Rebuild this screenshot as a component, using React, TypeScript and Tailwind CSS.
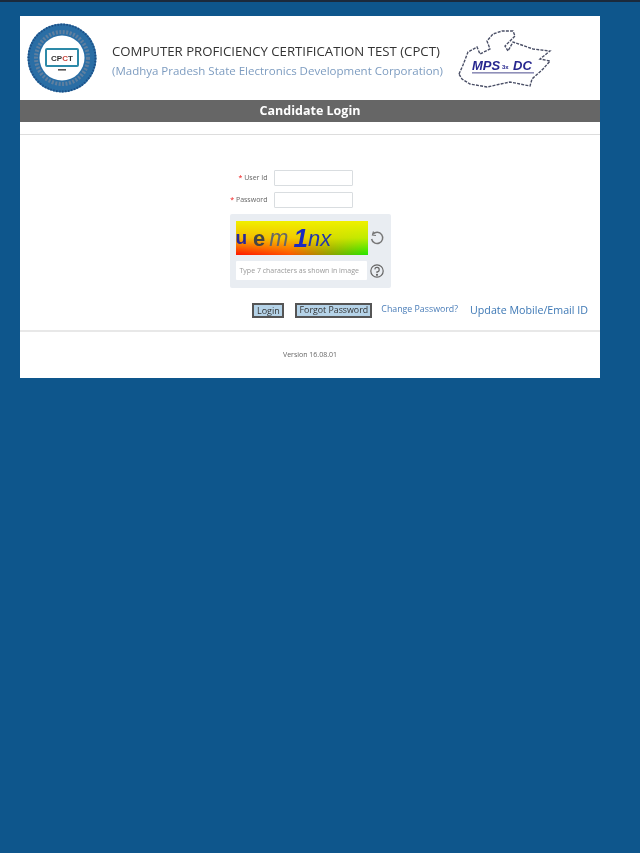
import React from 'react';

const sans = { fontFamily: '"Open Sans", "Liberation Sans", sans-serif' };

const CpctLogo: React.FC = () => (
  <svg width="72" height="72" viewBox="0 0 72 72" className="shrink-0">
    <circle cx="36" cy="36" r="34.5" fill="#2a6ea5" />
    <circle cx="36" cy="36" r="33.5" fill="none" stroke="#1d4f86" strokeWidth="2" strokeDasharray="1.5 1.5" />
    <circle cx="36" cy="36" r="26" fill="none" stroke="#5f7f9f" strokeWidth="4" strokeDasharray="2 1.5" />
    <circle cx="36" cy="36" r="22.5" fill="#fff" />
    <rect x="20" y="27" width="32" height="17" rx="1" fill="#fff" stroke="#2d8aa8" strokeWidth="2" />
    <text x="36" y="39" textAnchor="middle" fontSize="8" fontWeight="700" fontFamily="Liberation Sans, sans-serif" fill="#333">
      CP<tspan fill="#c9443c">C</tspan>T
    </text>
    <rect x="32" y="47" width="8" height="1.6" fill="#555" />
  </svg>
);

const MpsedcLogo: React.FC = () => (
  <svg width="100" height="64" viewBox="0 0 100 64" className="shrink-0">
    <path
      d="M4 47 L8 38 L13 25 L22 20 L25 27 L35 22 L32 14 L38 7 L47 4 L58 4 L60 9 L50 19 L53 24 L58 15 L78 22 L95 24 L85 32 L95 34 L88 42 L77 52 L75 59 L55 55 L32 60 L15 57 L7 52 Z"
      fill="none"
      stroke="#4a4f66"
      strokeWidth="1.4"
      strokeDasharray="3 1.2"
    />
    <text x="17" y="43" fontSize="13" fontWeight="700" fontStyle="italic" fontFamily="Liberation Sans, sans-serif" fill="#27278f">MPS</text>
    <text x="47" y="42" fontSize="6" fontWeight="700" fontFamily="Liberation Sans, sans-serif" fill="#27278f">3x</text>
    <text x="58" y="43" fontSize="13" fontWeight="700" fontStyle="italic" fontFamily="Liberation Sans, sans-serif" fill="#27278f">DC</text>
    <rect x="17" y="45" width="62" height="1.6" fill="#8f8fb8" />
  </svg>
);

const Field: React.FC<{ label: string }> = ({ label }) => (
  <div className="flex items-center justify-end gap-[6px] pr-[38px]">
    <span className="text-[7px] text-[#666]" style={sans}>
      <span className="text-[#e11]">* </span>
      {label}
    </span>
    <input className="w-[79px] h-[16px] shrink-0 bg-white border border-[#d9dde0] rounded-[1px]" />
  </div>
);

const App: React.FC = () => {
  return (
    <div className="w-[640px] h-[853px] bg-[#0e568c] border-t-2 border-[#1b2a3c] pt-[14px] overflow-hidden" style={sans}>
      <div className="ml-[20px] w-[580px] h-[362px] bg-white flex flex-col blur-[0.6px]">
        <div className="h-[84px] flex items-center pl-[6px]">
          <CpctLogo />
          <div className="ml-[14px] w-[336px] mt-[6px]">
            <div className="text-[13.2px] leading-[18px] text-[#333] whitespace-nowrap">COMPUTER PROFICIENCY CERTIFICATION TEST (CPCT)</div>
            <div className="text-[11.5px] leading-[18px] text-[#7d9cc0] whitespace-nowrap mt-[2px]">(Madhya Pradesh State Electronics Development Corporation)</div>
          </div>
          <div className="ml-[7px] mt-[2px]">
            <MpsedcLogo />
          </div>
        </div>

        <div className="h-[22px] pt-[1px] bg-[#666] text-white text-[12.5px] font-bold flex items-center justify-center">Candidate Login</div>
        <div className="h-[13px] border-b border-[#ddd]" />

        <div className="flex flex-col items-center">
          <div className="mt-[35px] w-[161px] flex flex-col">
            <div className="flex flex-col gap-[6px]">
              <Field label="User Id" />
              <Field label="Password" />
            </div>
            <div className="mt-[6px] h-[74px] bg-[#e9edf2] rounded-[2px] px-[6px] py-[7px]">
              <div className="flex items-center gap-[1px]">
                <div
                  className="w-[132px] h-[34px] shrink-0 overflow-hidden flex items-center"
                  style={{ backgroundImage: 'linear-gradient(to bottom, #f0f000 0%, rgba(240,240,0,0.75) 50%, rgba(240,240,0,0) 100%), linear-gradient(to right, #ff1500, #ff5000 40%, #22e800 100%)', fontFamily: '"Liberation Sans", sans-serif' }}
                >
                  <span className="text-[19px] font-bold text-[#26269a]">u</span>
                  <span className="text-[22px] font-bold text-[#444] ml-[6px]">e</span>
                  <span className="text-[23px] italic text-[#666] ml-[4px]">m</span>
                  <span className="text-[26px] font-bold italic text-[#1a2ac0] leading-none ml-[5px]">1</span>
                  <span className="text-[22px] italic text-[#2438a8]">nx</span>
                </div>
                <svg width="16" height="16" viewBox="0 0 16 16" className="shrink-0" fill="none" stroke="#777" strokeWidth="1.5">
                  <path d="M4 4 A5.6 5.6 0 1 1 2.6 9" />
                  <path d="M4.5 1.5 L3.5 5 L7 5.5" strokeWidth="1.2" />
                </svg>
              </div>
              <div className="flex items-center gap-[2px] mt-[6px]">
                <div className="w-[131px] h-[19px] shrink-0 bg-white rounded-[1px] px-[4px] text-[7px] leading-[19px] text-[#999] whitespace-nowrap overflow-hidden">Type 7 characters as shown in image</div>
                <svg width="16" height="16" viewBox="0 0 16 16" className="shrink-0" fill="none" stroke="#666" strokeWidth="1.2">
                  <circle cx="8" cy="8" r="6.2" />
                  <path d="M5.8 6.3 A2.2 2.2 0 1 1 8 8.8 V10" />
                  <circle cx="8" cy="11.8" r="0.5" fill="#666" />
                </svg>
              </div>
            </div>
          </div>

          <div className="w-full flex items-center justify-end h-[16px] mt-[14px] pr-[12px]">
            <button className="h-[15px] w-[32px] bg-[#b5d3e8] border-2 border-[#555] text-[9px] text-[#333] leading-none">Login</button>
            <button className="ml-[11px] h-[15px] w-[77px] bg-[#b5d3e8] border-2 border-[#555] text-[8.8px] text-[#333] leading-none whitespace-nowrap">Forgot Password</button>
            <a className="ml-[9px] text-[8.8px] text-[#4a7db8] whitespace-nowrap -mt-[1px]">Change Password?</a>
            <a className="ml-[12px] text-[10.7px] text-[#3d78b5] whitespace-nowrap mt-[1px]">Update Mobile/Email ID</a>
          </div>
        </div>

        <div className="mt-[12px] border-t-2 border-[#e8e8e8]" />
        <div className="text-center text-[7px] text-[#666] mt-[18px]">Version 16.08.01</div>
      </div>
    </div>
  );
};

export default App;
